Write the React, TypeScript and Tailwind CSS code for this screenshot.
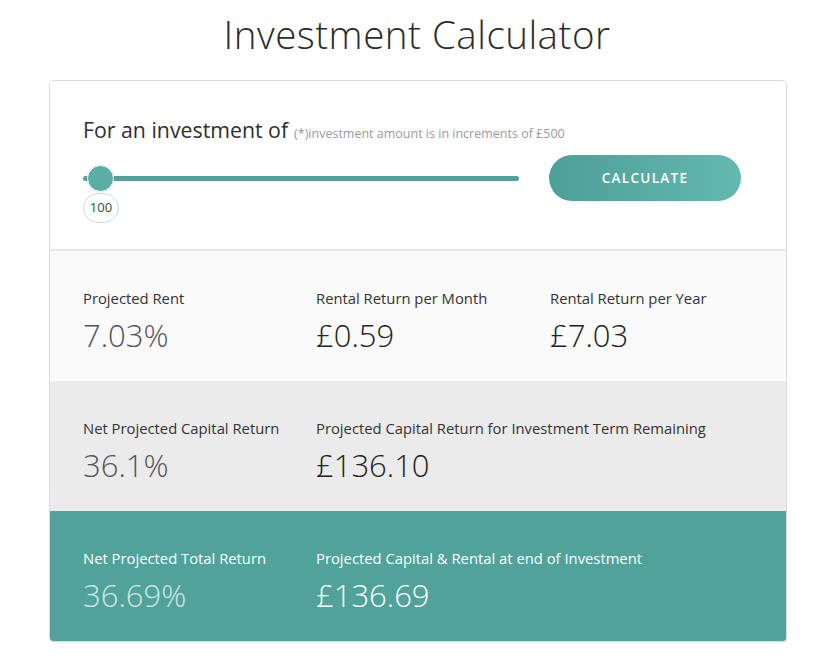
import React, { useState } from 'react';

const Stat = ({ label, value, labelClass, valueClass, width }: { label: string; value: string; labelClass: string; valueClass: string; width: string }) => (
  <div className={width}>
    <div className={`text-[14.8px] leading-[18px] ${labelClass}`}>{label}</div>
    <div className={`mt-[8px] text-[31px] leading-[40px] font-light ${valueClass}`}>{value}</div>
  </div>
);

const App = () => {
  const [amount] = useState(100);

  return (
    <div className="w-[828px] h-[664px] bg-white font-['Open_Sans',sans-serif] text-[#333]">
      <h1 className="pt-[10px] pl-[6px] text-center text-[38.5px] leading-[48px] font-light text-[#2b2b2b] tracking-[0.5px]">
        Investment Calculator
      </h1>

      <div className="ml-[49px] w-[738px] mt-[22px] border border-[#dcdcdc] rounded-[4px] overflow-hidden">
        {/* input */}
        <div className="h-[170px] bg-white border-b-2 border-[#e6e6e6] px-[33px] pt-[33px]">
          <div className="flex items-baseline gap-[6px]">
            <span className="text-[21.3px] text-[#2f2f2f]">For an investment of</span>
            <span className="text-[12.5px] text-[#9a9a9a]">(*)investment amount is in increments of £500</span>
          </div>
          <div className="mt-[18px] flex items-start">
            <div className="w-[436px] pt-[12px]">
              <div className="relative h-[5px] rounded-full bg-[#50a29a]">
                <div className="absolute left-[4px] top-[-11px] w-[27px] h-[27px] rounded-full bg-[#5aaea5] border border-white shadow-[0_0_2px_rgba(0,0,0,0.15)]" />
              </div>
              <div className="mt-[12px] w-[36px] h-[30px] rounded-full border border-[#c9dedb] flex items-center justify-center text-[13px] text-[#444]">
                {amount}
              </div>
            </div>
            <button className="ml-[30px] mt-[-9px] w-[192px] h-[46px] rounded-full bg-gradient-to-r from-[#4e9f97] to-[#63b9af] text-white text-[13.5px] font-semibold tracking-[1.3px]">
              CALCULATE
            </button>
          </div>
        </div>

        {/* rent */}
        <div className="h-[130px] bg-[#fafafa] px-[33px] pt-[38px] flex">
          <Stat width="w-[233px]" label="Projected Rent" value="7.03%" labelClass="text-[#333]" valueClass="text-[#555]" />
          <Stat width="w-[234px]" label="Rental Return per Month" value="£0.59" labelClass="text-[#333]" valueClass="text-[#222]" />
          <Stat width="w-[200px]" label="Rental Return per Year" value="£7.03" labelClass="text-[#333]" valueClass="text-[#222]" />
        </div>

        {/* capital */}
        <div className="h-[130px] bg-[#ebebeb] px-[33px] pt-[38px] flex">
          <Stat width="w-[233px]" label="Net Projected Capital Return" value="36.1%" labelClass="text-[#333]" valueClass="text-[#555]" />
          <Stat width="w-[420px]" label="Projected Capital Return for Investment Term Remaining" value="£136.10" labelClass="text-[#333]" valueClass="text-[#222]" />
        </div>

        {/* total */}
        <div className="h-[130px] bg-[#50a29a] px-[33px] pt-[38px] flex">
          <Stat width="w-[233px]" label="Net Projected Total Return" value="36.69%" labelClass="text-white" valueClass="text-[#cfe8e4]" />
          <Stat width="w-[420px]" label="Projected Capital & Rental at end of Investment" value="£136.69" labelClass="text-white" valueClass="text-white" />
        </div>
      </div>
    </div>
  );
};

export default App;
